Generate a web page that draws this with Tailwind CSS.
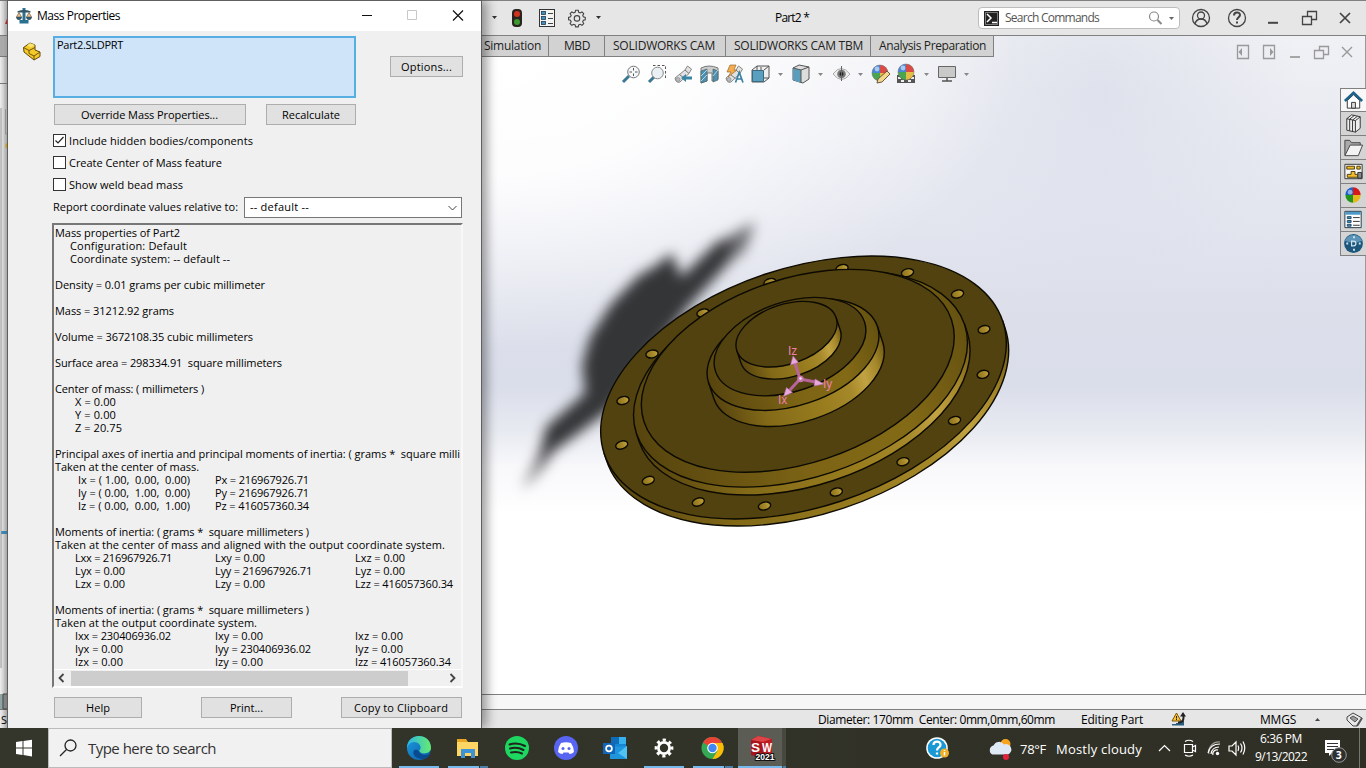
<!DOCTYPE html>
<html lang="en">
<head>
<meta charset="utf-8">
<title>Mass Properties</title>
<script src="https://cdn.jsdelivr.net/npm/@tailwindcss/browser@4"></script>
</head>
<body class="w-[1366px] h-[768px] overflow-hidden font-['Open_Sans','Noto_Sans',sans-serif] text-[11px] text-black bg-[#e6e6e6]">
<svg class="absolute h-0 w-0">
  <defs>
    <linearGradient id="side"><stop offset="0" stop-color="#57440f"/><stop offset=".25" stop-color="#836a18"/><stop offset=".6" stop-color="#9a7e1f"/><stop offset=".74" stop-color="#a5882a"/><stop offset=".84" stop-color="#c2a342"/><stop offset=".93" stop-color="#a3862a"/><stop offset="1" stop-color="#6f5812"/></linearGradient>
    <linearGradient id="chamfer"><stop offset="0" stop-color="#57450e"/><stop offset=".45" stop-color="#7d6415"/><stop offset=".75" stop-color="#836a16"/><stop offset="1" stop-color="#665211"/></linearGradient>
    <linearGradient id="hole"><stop offset="0" stop-color="#8c7119"/><stop offset=".6" stop-color="#a98b2b"/><stop offset="1" stop-color="#c4a53f"/></linearGradient>
    <linearGradient id="edge" x1="0" y1="0" x2="1" y2="1"><stop offset="0" stop-color="#1b9de2"/><stop offset="1" stop-color="#0c59a4"/></linearGradient>
    <linearGradient id="edgeTop"><stop offset="0" stop-color="#2cb5e8"/><stop offset="1" stop-color="#66eb6e"/></linearGradient>
    <filter id="soft" x="-20%" y="-20%" width="140%" height="140%" color-interpolation-filters="sRGB"><feGaussianBlur stdDeviation="6.5"/></filter>
    <g id="ball">
      <path d="M0 0V-8A8 8 0 0 0-8 0z" fill="#4a86d8"/><path d="M0 0V-8A8 8 0 0 1 8 0z" fill="#dc4a44"/>
      <path d="M0 0H-8A8 8 0 0 0 0 8z" fill="#4aa54f"/><path d="M0 0H8A8 8 0 0 1 0 8z" fill="#e6bd44"/>
      <circle r="8" fill="none" stroke="#666" stroke-width=".8" opacity=".6"/><circle cx="-3" cy="-4" r="2.4" fill="#fff" opacity=".55"/>
    </g>
    <g id="tube"><path d="M2 13L12 5L14.500 1L18.500 4L16 8.500L7 17Q3 18.500 2 13z" fill="#e2e2e2" stroke="#888"/><path d="M12 5L16 8.500M6.500 9.500L11.500 13.500" stroke="#777" fill="none"/><circle cx="5" cy="14.500" r="2" fill="#bbb" stroke="#888" stroke-width=".7"/></g>
  </defs>
</svg>

<div class="relative flex flex-col w-[1366px] h-[768px]">
  <!-- main application title bar -->
  <header class="flex h-9 shrink-0 items-center border-t border-b border-[#808080] bg-[#e6e6e6] pl-[482px]">
    <svg class="w-[120px] h-[34px] shrink-0" viewBox="482 1 120 34">
      <path d="M492 16h5l-2.500 3zM596 16h5l-2.500 3z" fill="#333"/>
      <rect x="512" y="9" width="10" height="18" rx="4" fill="#2a2420"/><circle cx="517" cy="14" r="3" fill="#d3321e"/><circle cx="517" cy="22" r="3" fill="#3c9a2e"/>
      <rect x="539.500" y="9.500" width="15" height="17" fill="#f3f3f3" stroke="#333"/>
      <g fill="#3d8fc0" stroke="#24394a" stroke-width=".8"><rect x="541.500" y="11.500" width="4" height="3"/><rect x="541.500" y="16.500" width="4" height="3"/><rect x="541.500" y="21.500" width="4" height="3"/></g>
      <path d="M548 13.500h5M548 18.500h5M548 23.500h5" stroke="#444"/>
      <g transform="translate(577 18) scale(.86) translate(-577 -18.500)"><path d="M575.400 9.500h3l.6 2.300 1.700.8 2.100-1.200 2 2-1.100 2.200.7 1.600 2.200.6v2.800l-2.200.6-.8 1.700 1.200 2.100-2 2-2.200-1.200-1.600.8-.6 2.200h-3l-.6-2.200-1.600-.8-2.200 1.200-2-2 1.200-2.100-.8-1.700-2.200-.6v-2.800l2.200-.6.8-1.600-1.200-2.200 2-2 2.100 1.200 1.700-.8z" fill="none" stroke="#444" stroke-width="1.300"/><circle cx="577" cy="19" r="3.200" fill="none" stroke="#444" stroke-width="1.300"/></g>
    </svg>
    <span class="ml-[173px] w-[203px] text-xs leading-4"><span data-w="34">Part2 *</span></span>
    <div class="flex h-[22px] w-[202px] items-center rounded-sm border border-[#bcbcbc] bg-white pl-[5px]">
      <svg class="size-[15px]" viewBox="0 0 15 15"><path fill="#222" d="M0 0h15v15H0z"/><path d="M1.500 1.500h12v12h-12z" stroke="#bbb" stroke-width=".6" fill="none"/><path d="M3 3l4 4-4 4M8 11.500h5" stroke="#fff" stroke-width="1.500" fill="none"/></svg>
      <span class="ml-[6px] w-[142px] text-xs leading-4 text-[#555]"><span data-w="94">Search Commands</span></span>
      <svg class="h-4 w-[30px]" viewBox="0 0 30 16"><circle cx="7" cy="6.500" r="4.500" fill="none" stroke="#888" stroke-width="1.200"/><path d="M10.500 10l4 4" stroke="#888" stroke-width="2"/><path d="M22 7h5l-2.500 3z" fill="#666"/></svg>
    </div>
    <svg class="ml-[11px] h-[34px] w-[174px]" viewBox="1191 1 174 34" fill="none" stroke="#444" stroke-width="1.300">
      <circle cx="1201" cy="18" r="8.500"/><circle cx="1201" cy="15.500" r="3.500"/><path d="M1195 24c1-4 3-5 6-5s5 1 6 5"/>
      <circle cx="1237" cy="18" r="8.500"/><path d="M1234 15.500c0-4 6-4 6-.5 0 2-3 2.500-3 5M1237 21.500v2" stroke-width="2"/>
      <path d="M1268 22.800h10" stroke-width="2"/><path d="M1307.500 16v-4.500h9v8h-5"/><path d="M1302.500 16.500h9v8h-9z" fill="#e6e6e6"/><path d="M1340 13l10 10M1350 13l-10 10" stroke-width="1.700"/>
    </svg>
  </header>

  <!-- graphics area -->
  <main class="relative h-[658px] shrink-0 border-r border-[#999] bg-[linear-gradient(180deg,#f0f1f5_0px,#e5e7f0_150px,#dcdfea_280px,#dadeea_350px,#e8eaf1_395px,#f8f8fb_430px,#ffffff_480px)]">
    <svg class="absolute left-0 top-0 h-[657px] w-[1365px]" viewBox="0 36 1365 657">
      <defs>
        <radialGradient id="glow" gradientUnits="userSpaceOnUse" cx="480" cy="60" r="430" gradientTransform="translate(480 60) scale(1.25 .68) translate(-480 -60)"><stop offset="0" stop-color="#fff"/><stop offset=".4" stop-color="#fff" stop-opacity=".9"/><stop offset="1" stop-color="#fff" stop-opacity="0"/></radialGradient>
        <radialGradient id="haze" gradientUnits="userSpaceOnUse" cx="1100" cy="90" r="200"><stop offset="0" stop-color="#d8dce8" stop-opacity=".65"/><stop offset="1" stop-color="#d8dce8" stop-opacity="0"/></radialGradient>
      </defs>
      <path fill="url(#haze)" d="M850 36h516v300H850z"/>
      <path fill="url(#glow)" d="M0 36h1365v500H0z"/>
      <g fill="#343537" filter="url(#soft)">
        <path d="M522 490L541 450L560 440L545 465zM722 240L755 222L745 250L724 268z" opacity=".7"/>
        <path d="M538 462L546 427L585 393L582 365L590 337L611 304L638 276L655 266L672 253L681 277L718 241L733 240L724 268L690 305L655 350L612 408L572 438z"/>
      </g>
      <g stroke="#0c0a02" stroke-width="1.400">
        <g transform="translate(803.5 387.5) rotate(-18.4)"><path d="M-210 0V7.500A210 119.600 0 0 0 210 7.500V0z" fill="url(#side)"/><ellipse rx="210" ry="119.600" fill="#52420f"/></g>
        <g fill="url(#hole)">
          <ellipse cx="623" cy="400.500" rx="6.200" ry="3.900" transform="rotate(-14 623 400.500)"/><ellipse cx="621.700" cy="445" rx="6.200" ry="3.900" transform="rotate(-18 621.700 445)"/>
          <ellipse cx="648.300" cy="480.500" rx="6.200" ry="3.900" transform="rotate(-18 648.300 480.500)"/><ellipse cx="698.300" cy="502" rx="6.200" ry="3.900" transform="rotate(-18 698.300 502)"/>
          <ellipse cx="764.500" cy="506" rx="6.200" ry="3.900" transform="rotate(-14 764.500 506)"/><ellipse cx="836.300" cy="492" rx="6.200" ry="3.900" transform="rotate(-14 836.300 492)"/>
          <ellipse cx="903" cy="461.700" rx="6.200" ry="3.900" transform="rotate(-14 903 461.700)"/><ellipse cx="954.500" cy="420.500" rx="6.200" ry="3.900" transform="rotate(-14 954.500 420.500)"/>
          <ellipse cx="983" cy="374.300" rx="6" ry="3.900" transform="rotate(-14 983 374.300)"/><ellipse cx="984" cy="329.500" rx="6" ry="3.900" transform="rotate(-14 984 329.500)"/>
          <ellipse cx="957.500" cy="294" rx="6.200" ry="3.900" transform="rotate(-14 957.500 294)"/><ellipse cx="907.500" cy="272.700" rx="6.200" ry="3.900" transform="rotate(-14 907.500 272.700)"/>
          <ellipse cx="842" cy="268.500" rx="6.200" ry="3.900" transform="rotate(-14 842 268.500)"/><ellipse cx="770" cy="282.500" rx="6.200" ry="3.900" transform="rotate(-14 770 282.500)"/>
          <ellipse cx="703" cy="313" rx="6.200" ry="3.900" transform="rotate(-14 703 313)"/><ellipse cx="652" cy="354" rx="6.200" ry="3.900" transform="rotate(-10 652 354)"/>
        </g>
        <g transform="translate(800.5 379) rotate(-18.4)"><path d="M-172.900 0V8.300A172.900 98.400 0 0 0 172.900 8.300V0z" fill="url(#side)"/><ellipse rx="172.900" ry="98.400" fill="url(#chamfer)"/></g>
        <ellipse rx="162" ry="92.300" fill="#52420f" transform="translate(797.8 370.8) rotate(-18.4)"/>
        <g transform="translate(793 354.500) rotate(-18.4)"><path d="M-89 0V17A89 50.800 0 0 0 89 17V0z" fill="url(#side)"/><ellipse rx="89" ry="50.800" fill="url(#chamfer)"/></g>
        <ellipse rx="78.500" ry="44.700" fill="#52420f" transform="translate(790 346.600) rotate(-18.4)"/>
        <g transform="translate(786.500 334.200) rotate(-18.4)"><path d="M-52.300 0V12.800A52.300 29.800 0 0 0 52.300 12.800V0z" fill="url(#side)"/><ellipse rx="52.300" ry="29.800" fill="#52420f"/></g>
      </g>
      <!-- principal axes triad -->
      <g stroke="#b8649c" stroke-width="3" fill="#e39ad0"><path d="M800 379L795 363M800 379L818 382.500M800 379L789 391"/></g>
      <path d="M793 356l-2.500 9 8-2.500zM824 384l-9-5-1 7zM783.500 396.500l3-9 6 5z" fill="#e6a9dc" stroke="#b565a2" stroke-width=".6"/>
      <circle cx="800.500" cy="379" r="3.300" fill="#c678ae"/><circle cx="800.500" cy="378.500" r="1.200" fill="#ffe4f8"/>
      <g fill="#ee7fae" class="font-['Liberation_Sans',sans-serif] text-[12px]"><text x="788" y="355">Iz</text><text x="823" y="388">Iy</text><text x="778" y="404">Ix</text></g>
      <!-- document window buttons -->
      <g fill="none" stroke="#999"><path d="M1237.500 45.500h11v13h-11zM1263.500 45.500h11v13h-11z" stroke-width="1.300"/><path d="M1242 48v8l-3.500-4zM1270 48v8l3.500-4z" fill="#999" stroke="none"/><path d="M1290 57h10" stroke-width="1.700"/><path d="M1319.500 50.500v-4h9v8h-5M1314.500 50.500h9v8h-9z" stroke-width="1.300"/><path d="M1342 47l10 10M1352 47l-10 10" stroke-width="1.400"/></g>
      <!-- heads-up view icons -->
      <g fill="none">
        <g stroke="#3c7896" stroke-width="3"><path d="M629 76l-6 6M655 76l-6 6"/></g>
        <circle cx="633.500" cy="72" r="5.800" fill="#f5f7f9" stroke="#777"/><path d="M633.500 68v8M629.500 72h8" stroke="#555" stroke-dasharray="2.500 3"/>
        <circle cx="657.500" cy="73" r="5.800" fill="#eaf0f4" stroke="#888"/><path d="M653 65.500h12.500V78" stroke="#555" stroke-dasharray="2.500 2"/>
        <use href="#tube" x="673" y="65"/><path d="M692 79.500h-6v2.500l-5-4 5-4v2.500h6z" fill="#3986a6"/>
        <path d="M701 68q8-4 17 0v11l-6 2v-8h-5v8l-6 2z" fill="#ccc" stroke="#777"/><path d="M701 71l6-2v12l-6 2zM713 69l5 2v9l-5 2z" fill="#4b91b2" stroke="#566" stroke-width=".7"/><path d="M701 76l6-6M701 81l6-6M713 76l5-6" stroke="#b5d4e2"/>
        <use href="#tube" x="724" y="65"/><path d="M730 65h6l-2 5h3l-9 7 3-5h-4z" fill="#f5ac4c" stroke="#9b6a33" stroke-width=".7"/><path d="M735.500 82.500l3.800-10 3.700 10M737 79h5" stroke="#3980a4" stroke-width="1.700"/>
        <path d="M757 66h12v12l-5 4h-12V70z" fill="#eee" stroke="#555"/><path d="M757 66v12h12M764 70l5-4M761 67v6" stroke="#555"/><path d="M752.500 70.500h11v11h-11z" fill="#5a9fbd" stroke="#3b6a80"/>
        <path d="M793 68l6-3 10 2v12l-6 4-10-3z" fill="#ddd" stroke="#555"/><path d="M793 68l8 2v13l-8-3z" fill="#5b9ebb"/><path d="M793 68l8 2 8-3M801 70v13" stroke="#555"/>
        <path d="M833 74q8-11 17 0q-8 11-17 0z" fill="#eee" stroke="#aaa"/><circle cx="841.500" cy="74" r="4.300" fill="#777"/><circle cx="841.500" cy="74" r="2" fill="#222"/><path d="M841.500 66v15" stroke="#666"/>
        <use href="#ball" x="880" y="73"/><path d="M878 79l9-8 3 3-8 8-5 1z" fill="#f3d78a" stroke="#6a5640"/>
        <path d="M897 75h18v8h-18z" fill="#555"/><path d="M898 77h3v2h-3zM911 77h3v2h-3zM901 80h3v2h-3zM908 80h3v2h-3z" fill="#eee"/><use href="#ball" x="906" y="72"/>
        <path d="M938.500 66.500h17v11h-17z" fill="#c9c9c9" stroke="#666"/><path d="M947 78v3M942 81h10" stroke="#555" stroke-width="1.500"/>
        <path d="M778 73h5l-2.500 3zM818 73h5l-2.500 3zM858 73h5l-2.500 3zM924 73h5l-2.500 3zM964 73h5l-2.500 3z" fill="#888"/>
      </g>
    </svg>
    <nav class="relative ml-[482px] flex h-[21px] w-[512px] text-xs leading-[19px] text-[#222]">
      <div class="w-[67px] border-r border-b border-[#808080] bg-[#d2d2d2] pl-[2px]"><span data-w="57">Simulation</span></div>
      <div class="w-14 border-r border-b border-[#808080] bg-[#d2d2d2] pl-[15px]"><span data-w="26">MBD</span></div>
      <div class="w-[121px] border-r border-b border-[#808080] bg-[#d2d2d2] pl-2"><span data-w="102">SOLIDWORKS CAM</span></div>
      <div class="w-[145px] border-r border-b border-[#808080] bg-[#d2d2d2] pl-2"><span data-w="129">SOLIDWORKS CAM TBM</span></div>
      <div class="w-[123px] border-r border-b border-[#808080] bg-[#d2d2d2] pl-2"><span data-w="107">Analysis Preparation</span></div>
    </nav>
    <!-- task pane tabs -->
    <aside class="absolute right-[-1px] top-[52px] flex w-[26px] flex-col border-l border-t border-[#808080] bg-[#d4d4d4]">
      <svg class="h-[23px] border-b border-[#808080] bg-[#f8f8f8]" viewBox="0 0 25 23"><path d="M6 12v8h13v-8l-6.500-6z" fill="#fff" stroke="#333"/><path d="M3.500 12.500l9-8.500 9 8.500" fill="none" stroke="#1f6289" stroke-width="2.800"/><path d="M10.500 20v-6h4v6z" fill="#ddd" stroke="#333"/></svg>
      <svg class="h-6 border-b border-[#808080]" viewBox="0 0 25 24" fill="#eee" stroke="#333"><path d="M5.500 7l5-4 9 2v12l-5 4-9-2zM5.500 7l9 2v12M8.500 7.500v12M11.500 8.500v12M14.500 9l5-4M8.500 7.500l5-4M11.500 8.500l5-4"/></svg>
      <svg class="h-6 border-b border-[#808080]" viewBox="0 0 25 24" stroke="#444"><path d="M3.500 20V4.500h5l2 2.500h9v3" fill="#aaa"/><path d="M3.500 20.500L9 9.500h13l-4.500 11z" fill="#f3f3f3"/></svg>
      <svg class="h-6 border-b border-[#808080]" viewBox="0 0 25 24"><path d="M3.500 4.500h18v15h-18z" fill="#f7f7f7" stroke="#333"/><path d="M5.500 6.500h8v3h-8zM16 6.500h3.500v3H16zM10 12h4v3h3v3H6v-3h4z" fill="#f4bd29" stroke="#4c3c0a"/><path d="M17 13h4v6h-4z" fill="#888" stroke="#333"/></svg>
      <svg class="h-6 border-b border-[#808080]" viewBox="0 0 25 24"><g transform="translate(12 11.500)"><path d="M0 0V-8A8 8 0 0 0-8 0z" fill="#1b61cc"/><path d="M0 0V-8A8 8 0 0 1 8 0z" fill="#d81818"/><path d="M0 0H-8A8 8 0 0 0 0 8z" fill="#22951f"/><path d="M0 0H8A8 8 0 0 1 0 8z" fill="#e5b91c"/><circle cx="-3" cy="-3" r="2.500" fill="#fff" opacity=".5"/></g></svg>
      <svg class="h-6 border-b border-[#808080]" viewBox="0 0 25 24"><path d="M3.500 3.500h17v17h-17z" fill="#fff" stroke="#234"/><path d="M4 4h16v3H4z" fill="#4a9bc7"/><g fill="#4a9bc7" stroke="#1e4864"><path d="M6 9h4v2H6zM6 13h4v2H6zM6 17h4v2H6z"/></g><path d="M12 10h7M12 14h7M12 18h7" stroke="#333"/></svg>
      <svg class="h-6 border-b border-[#808080]" viewBox="0 0 25 24"><circle cx="12.500" cy="12" r="9.800" fill="#1c567c"/><path d="M3.500 9A9.800 9.800 0 0 1 21.500 9Q12 13 3.500 9z" fill="#5b94b6"/><path d="M10.500 9.500h2a2.500 2.500 0 0 1 0 5h-2z" fill="none" stroke="#cfe3ef" stroke-width="1.300"/><path d="M5 12h2M18 12h2M12 5.500h2M12 18.500h2" stroke="#cfe3ef" stroke-width="2"/></svg>
    </aside>
  </main>
  <div class="h-4 shrink-0 border-y border-[#808080] bg-[#f7f7f7]"></div>
  <footer class="flex h-[18px] shrink-0 bg-[#e6e6e6] pl-[818px] text-xs leading-[19px]">
    <span class="w-[263px] whitespace-pre"><span data-w="237">Diameter: 170mm  Center: 0mm,0mm,60mm</span></span>
    <span class="w-[90px]"><span data-w="62">Editing Part</span></span>
    <svg class="w-4 h-[18px]" viewBox="0 0 16 18"><path d="M1 15.500h12V11h-3v1H8v1H5v1H1z" fill="#2a5f80"/><path d="M5.500 3L10 11H1z" fill="#f9c430" stroke="#7e5208"/><path d="M5.500 6v2.500M5.500 9v1" stroke="#222"/><path d="M7 11.500c4 0 4.500-1.500 4.500-5H9L12 2l3 4.500h-1.500c0 5-1.500 7-6.500 7z" fill="#222"/></svg>
    <span class="ml-[73px] w-[55px]"><span data-w="36">MMGS</span></span>
    <svg class="h-[18px] w-[50px]" viewBox="1315 710 50 18"><path d="M1315 721h5l-2.500-3z" fill="#444"/><path d="M1347 717l6-4 9 5-5 8h-4l-6-6z" fill="#e8e8e8" stroke="#444"/><path d="M1350 718l5 4 3-3-5-3z" fill="#999" stroke="#555"/><path d="M1357 726l5-8" stroke="#555" stroke-width="2"/></svg>
  </footer>

  <!-- taskbar -->
  <div class="flex h-10 shrink-0 bg-[linear-gradient(90deg,#35362b,#323328_50%,#2f2f25)] text-white">
    <svg class="w-12 h-10" viewBox="0 0 48 40"><path d="M16 14l6.500-1v6.500H16zM23.500 12.900L32 11.700v7.800h-8.500zM16 20.500h6.500V27L16 26zM23.500 20.500H32v7.900l-8.500-1.300z" fill="#fff"/></svg>
    <div class="flex w-[344px] items-center border border-[#bbb] bg-[#f1f1f1] text-[#333]">
      <svg class="ml-[10px] size-5" viewBox="0 0 20 20" fill="none" stroke="#222" stroke-width="1.300"><circle cx="11.500" cy="7.500" r="5.500"/><path d="M7.500 11.500L1 18"/></svg>
      <span class="ml-[9px] text-[15px]"><span data-w="128">Type here to search</span></span>
    </div>
    <svg class="h-10 w-[394px]" viewBox="392 728 394 40">
      <path d="M738 728h48v40h-48z" fill="#5b5c53"/><path d="M782 728h4v40h-4z" fill="#474840"/>
      <path d="M399 766h40v2h-40zM448 766h31v2h-31zM644 766h40v2h-40zM693 766h31v2h-31zM738 766h44v2h-44z" fill="#76b9ed"/><path d="M480 766h8v2h-8zM725 766h8v2h-8zM783 766h3v2h-3z" fill="#4c7fa8"/>
      <circle cx="419" cy="748" r="12" fill="url(#edge)"/><path d="M407 748C407 732 431 732 431 748C431 754 421 755 419 751C423 747 419 742 414 742Q409 742 407 748z" fill="url(#edgeTop)"/><path d="M419 751C412 746 410 758 422 759C426 759 429 757 430 754C425 756 420 755 419 751z" fill="#0a4a91"/>
      <path d="M457 739h9l2 3h10v14h-21z" fill="#e9a823"/><path d="M457 742h21v14h-21z" fill="#ffd564"/><path d="M461 758v-9h14v9h-4v-5h-6v5z" fill="#3d93d8"/>
      <circle cx="517" cy="748" r="12" fill="#1ed760"/><path d="M509.500 744.500q8-2.500 15.500 1.500M510 748.500q7-2 13.500 1.500M511 752.500q6-1.500 11 1" fill="none" stroke="#20241c" stroke-width="2" stroke-linecap="round"/>
      <circle cx="566" cy="748" r="12" fill="#5865f2"/><path d="M561 743q5-1.500 10 0 3 4 3 9-2 2-4.500 2l-1-1.500h-5l-1 1.500q-2.500 0-4.500-2 0-5 3-9z" fill="#fff"/><circle cx="563" cy="748.500" r="1.500" fill="#5865f2"/><circle cx="569" cy="748.500" r="1.500" fill="#5865f2"/>
      <path d="M611 737h15v14h-15z" fill="#1486d3"/><path d="M611 737h8v7h-8z" fill="#0f6cb8"/><path d="M619 737h7v7h-7z" fill="#36b1ed"/><path d="M610 747l17-1v13h-17z" fill="#1e95dd"/><path d="M627 746l-9 7 9 6z" fill="#50c3f4"/><path d="M603 743h12v11h-12z" fill="#0f66b8"/><circle cx="609" cy="748.500" r="2.900" fill="none" stroke="#fff" stroke-width="1.700"/>
      <g stroke="#fff" fill="none"><circle cx="664" cy="748" r="5.600" stroke-width="2.800"/><circle cx="664" cy="748" r="8" stroke-width="2.800" stroke-dasharray="3.140 3.140" transform="rotate(-11 664 748)"/></g>
      <circle cx="712.500" cy="748" r="11" fill="#34a853"/><path d="M712.500 748L703 742.500A11 11 0 0 1 722 742.500z" fill="#ea4335"/><path d="M712.500 743H722.500A11 11 0 0 1 712.500 759L717.500 751z" fill="#fbbc05"/><circle cx="712.500" cy="748" r="5.300" fill="#fff"/><circle cx="712.500" cy="748" r="4.200" fill="#4285f4"/>
      <path d="M751 740l7-4 14 3v14l-7 6-14-4z" fill="#a9141c"/><path d="M751 740l7-4 14 3-9 3z" fill="#de4348"/><path d="M763 742l9-3v14l-7 6z" fill="#bd1c24"/>
      <g fill="#fff" class="font-['Liberation_Sans',sans-serif] font-bold"><text x="751" y="752" font-size="12" textLength="9" lengthAdjust="spacingAndGlyphs">S</text><text x="762" y="751.500" font-size="12" textLength="10" lengthAdjust="spacingAndGlyphs">W</text><text x="755.500" y="759.500" font-size="8.500" stroke="#111" stroke-width="2" paint-order="stroke">2021</text></g>
    </svg>
    <svg class="ml-[139px] h-10 w-[63px] shrink-0" viewBox="925 728 63 40"><circle cx="937" cy="748" r="10.800" fill="#fff"/><circle cx="937" cy="748" r="9.300" fill="#1899d5"/><path d="M933.500 745c0-4.500 7-4.500 7-.3 0 2.800-3.500 2.800-3.500 5.800M937 752.500v2" stroke="#fff" stroke-width="2.300" fill="none"/><circle cx="944.500" cy="753" r="4.500" fill="#efae27"/><path d="M944.500 752v3.500M944.500 750v1" stroke="#fff" stroke-width="1.500"/></svg>
    <svg class="h-10 w-[32px] shrink-0" viewBox="988 728 32 40"><circle cx="1005.500" cy="744" r="5" fill="#f8a51e"/><path d="M993.500 754.500a4.800 4.800 0 0 1 1-9 6 6 0 0 1 10.500-1 5 5 0 0 1 4 10z" transform="translate(-1 0)" fill="#dfe8f5"/><circle cx="1007" cy="757" r="3" fill="#e2213d" transform="translate(-1 0)"/></svg>
    <span class="w-[36px] shrink-0 text-[13px] leading-[42px]"><span data-w="26">78°F</span></span>
    <span class="w-[102px] shrink-0 text-[13px] leading-[42px]"><span data-w="86">Mostly cloudy</span></span>
    <svg class="h-10 w-[90px] shrink-0" viewBox="1158 728 90 40" fill="none" stroke="#fff" stroke-width="1.200"><path d="M1159 751l5.500-5.500L1170 751"/><path d="M1184.500 744.500h8v8h-8zM1192.500 747l3-1.500v6l-3-1.500M1185 741.500q4-2.500 8 0M1185 755q4 2.500 8 0"/><path d="M1213 755a4 4 0 0 1 5-5M1211 754q1-7 8-7M1208 753q2-9 12-9"/><circle cx="1217.500" cy="753.500" r="1.700" fill="#fff" stroke="none"/><path d="M1209 754a10 10 0 0 1 11-12" opacity=".5"/><path d="M1229 746h3l4-4v13l-4-4h-3zM1238 745.500q1.500 2.500 0 5.500M1240.500 743.500q3 4.500 0 9M1243 741.500q3.500 6.500 0 13"/></svg>
    <div class="-ml-[2px] w-[70px] shrink-0 pt-[2px] text-center text-xs leading-[18px]"><div><span data-w="42">6:36 PM</span></div><div><span data-w="52">9/13/2022</span></div></div>
    <svg class="h-10 w-[40px] shrink-0" viewBox="1316 728 40 40"><path d="M1325 740h15v13h-8l-3 3v-3h-4z" fill="#fff"/><path d="M1327 743.500h11M1327 746.500h11M1327 749.500h7" stroke="#333" stroke-width="1.200"/><circle cx="1339" cy="755" r="7.300" fill="#2f3031" stroke="#999"/><text x="1335.700" y="759" font-size="10.500" font-weight="bold" fill="#fff">3</text></svg>
    <div class="ml-[3px] border-l border-[#77776f]"></div>
  </div>

  <!-- left edge of the feature tree -->
  <div class="absolute left-0 top-0 h-[728px] w-2 overflow-hidden bg-[linear-gradient(90deg,#eeeeee,#a9a9a9)]">
    <svg class="h-[728px] w-2" viewBox="0 0 8 728"><path d="M0 36h8v20H0z" fill="#aaa"/><path d="M0 .5h8M0 35.500h8M0 56.500h8M0 83.500h8M0 709.500h8" stroke="#777"/><path d="M8 16l-3 8h3z" fill="#c22"/><path d="M1 531h7v3H1z" fill="#3a88b8"/><path d="M8 142q-4 2-2 6h2z" fill="#d5a40d"/><path d="M5.500 109v25H8M1 108v560" fill="none" stroke="#999"/><path d="M0 694h8v15H0z" fill="#8da4a4"/><path d="M3 694h5v15H3z" fill="#888" stroke="#444"/><text x="1" y="724" font-size="11">S</text></svg>
  </div>

  <!-- Mass Properties dialog -->
  <section class="absolute left-[7px] top-0 flex h-[728px] w-[475px] flex-col border-x border-t border-[#606060] bg-[#f0f0f0] shadow-[5px_0_10px_rgba(0,0,0,0.38)] [clip-path:inset(0_-16px_0_-3px)]">
    <div class="flex h-[30px] shrink-0 items-center bg-white">
      <svg class="ml-2 h-4 w-4" viewBox="0 0 16 16"><path d="M6.500 0h3v12h3v3.500h-9V12h3z" fill="#2a7090"/><path d="M1.500 3.200q6.500-2.500 13 0v1.300h-13z" fill="#315565"/><path d="M.5 9l2.500-4.500L5.500 9zM10.500 9L13 4.500 15.500 9z" fill="#efc685" stroke="#6a5a50" stroke-width=".7"/><path d="M0 9h6q-.5 3-3 3T0 9M10 9h6q-.5 3-3 3t-3-3" fill="#31566a"/></svg>
      <span class="ml-[5px] w-[316px] text-xs"><span data-w="83">Mass Properties</span></span>
      <svg class="h-[30px] w-[112px]" viewBox="353 1 112 30" fill="none"><path d="M362 15.500h10" stroke="#111"/><path d="M407.500 10.500h9v9h-9z" stroke="#c8c8c8"/><path d="M453 10.500l10 10M463 10.500l-10 10" stroke="#111" stroke-width="1.200"/></svg>
    </div>
    <div class="flex h-[67px] shrink-0 pt-[5px] pl-[14px]">
      <svg class="mt-[4px] h-[22px] w-5" viewBox="0 0 20 22"><path d="M1.500 7.500L8 3l5 2v5l5 2v4.500L12 20 2 12z" fill="#f5c928" stroke="#5e480c"/><path d="M1.500 7.500l5.500 3v3l5 2.500v4M7 10.500l6-3M12 16l6-4M8 3v3" fill="none" stroke="#6d5410"/><path d="M8 3l5 2-4 2.500-4-2z" fill="#fae36f"/></svg>
      <div class="ml-[11px] h-[62px] w-[303px] border-2 border-[#57aee2] bg-[#cfe4f8] pl-[2px] leading-[14px]"><span data-w="66">Part2.SLDPRT</span></div>
      <div class="ml-[34px] mt-5 h-[21px] w-[73px] border border-[#adadad] bg-[#e1e1e1] pl-[10px] leading-5"><span data-w="51">Options...</span></div>
    </div>
    <div class="flex shrink-0 pl-[46px] pt-[6px] leading-5">
      <div class="h-[21px] w-[192px] border border-[#adadad] bg-[#e1e1e1] pl-[26px]"><span data-w="137">Override Mass Properties...</span></div>
      <div class="ml-5 h-[21px] w-[90px] border border-[#adadad] bg-[#e1e1e1] pl-[15px]"><span data-w="58">Recalculate</span></div>
    </div>
    <div class="flex shrink-0 flex-col pl-[45px] pt-[5px] leading-[22px]">
      <div class="flex h-[22px] items-center gap-[3px]"><svg class="-mt-px size-[13px] border border-[#333] bg-white" viewBox="0 0 11 11"><path d="M1.500 5.500L4 8l5.500-6" fill="none" stroke="#222" stroke-width="1.200"/></svg><span data-w="184">Include hidden bodies/components</span></div>
      <div class="flex h-[22px] items-center gap-[3px]"><i class="-mt-px size-[13px] border border-[#333] bg-white"></i><span data-w="153">Create Center of Mass feature</span></div>
      <div class="flex h-[22px] items-center gap-[3px]"><i class="-mt-px size-[13px] border border-[#333] bg-white"></i><span data-w="114">Show weld bead mass</span></div>
      <div class="mt-[1px] flex h-[21px] items-center">
        <span class="w-[191px] pb-[2px] leading-5"><span data-w="185">Report coordinate values relative to:</span></span>
        <div class="flex h-[21px] w-[218px] items-center border border-[#777] bg-white pl-[5px]"><span class="w-[198px] pb-[2px] leading-[17px]"><span data-w="59">-- default --</span></span><svg class="h-2 w-[9px]" viewBox="0 0 9 8" fill="none" stroke="#444"><path d="M.5 2l4 4 4-4"/></svg></div>
      </div>
    </div>
    <div class="ml-11 mt-[5px] flex h-[465px] w-[411px] shrink-0 flex-col border-2 border-t-[#777] border-l-[#777] border-r-[#f8f8f8] border-b-white">
      <div class="h-[444px] overflow-hidden pl-[1px] pt-[1px] leading-[13px]">
        <div class="h-[13px]"><span data-w="125">Mass properties of Part2</span></div>
        <div class="h-[13px] pl-[15px]"><span data-w="117">Configuration: Default</span></div>
        <div class="h-[13px] pl-[15px]"><span data-w="160">Coordinate system: -- default --</span></div>
        <div class="mt-[13px] h-[13px]"><span data-w="210">Density = 0.01 grams per cubic millimeter</span></div>
        <div class="mt-[13px] h-[13px]"><span data-w="119">Mass = 31212.92 grams</span></div>
        <div class="mt-[13px] h-[13px]"><span data-w="198">Volume = 3672108.35 cubic millimeters</span></div>
        <div class="mt-[13px] h-[13px]"><span data-w="227">Surface area = 298334.91  square millimeters</span></div>
        <div class="mt-[13px] h-[13px]"><span data-w="149">Center of mass: ( millimeters )</span></div>
        <div class="h-[13px] pl-5"><span data-w="41">X = 0.00</span></div>
        <div class="h-[13px] pl-5"><span data-w="41">Y = 0.00</span></div>
        <div class="h-[13px] pl-5"><span data-w="47">Z = 20.75</span></div>
        <div class="mt-[13px] h-[13px]"><span data-w="405">Principal axes of inertia and principal moments of inertia: ( grams *  square milli</span></div>
        <div class="h-[13px]"><span data-w="144">Taken at the center of mass.</span></div>
        <div class="grid h-[13px] grid-cols-[137px_140px] pl-[23px]"><span data-w="112">Ix = ( 1.00,  0.00,  0.00)</span><span data-w="94">Px = 216967926.71</span></div>
        <div class="grid h-[13px] grid-cols-[137px_140px] pl-[23px]"><span data-w="112">Iy = ( 0.00,  1.00,  0.00)</span><span data-w="94">Py = 216967926.71</span></div>
        <div class="grid h-[13px] grid-cols-[137px_140px] pl-[23px]"><span data-w="112">Iz = ( 0.00,  0.00,  1.00)</span><span data-w="94">Pz = 416057360.34</span></div>
        <div class="mt-[13px] h-[13px]"><span data-w="254">Moments of inertia: ( grams *  square millimeters )</span></div>
        <div class="h-[13px]"><span data-w="390">Taken at the center of mass and aligned with the output coordinate system.</span></div>
        <div class="grid h-[13px] grid-cols-[140px_140px_120px] pl-5"><span data-w="97">Lxx = 216967926.71</span><span data-w="50">Lxy = 0.00</span><span data-w="50">Lxz = 0.00</span></div>
        <div class="grid h-[13px] grid-cols-[140px_140px_120px] pl-5"><span data-w="50">Lyx = 0.00</span><span data-w="97">Lyy = 216967926.71</span><span data-w="50">Lyz = 0.00</span></div>
        <div class="grid h-[13px] grid-cols-[140px_140px_120px] pl-5"><span data-w="50">Lzx = 0.00</span><span data-w="50">Lzy = 0.00</span><span data-w="98">Lzz = 416057360.34</span></div>
        <div class="mt-[13px] h-[13px]"><span data-w="254">Moments of inertia: ( grams *  square millimeters )</span></div>
        <div class="h-[13px]"><span data-w="202">Taken at the output coordinate system.</span></div>
        <div class="grid h-[13px] grid-cols-[140px_140px_120px] pl-5"><span data-w="96">Ixx = 230406936.02</span><span data-w="48">Ixy = 0.00</span><span data-w="48">Ixz = 0.00</span></div>
        <div class="grid h-[13px] grid-cols-[140px_140px_120px] pl-5"><span data-w="48">Iyx = 0.00</span><span data-w="96">Iyy = 230406936.02</span><span data-w="48">Iyz = 0.00</span></div>
        <div class="grid h-[13px] grid-cols-[140px_140px_120px] pl-5"><span data-w="48">Izx = 0.00</span><span data-w="48">Izy = 0.00</span><span data-w="96">Izz = 416057360.34</span></div>
      </div>
      <div class="flex h-[17px] items-center border-t border-white">
        <svg class="h-4 w-[17px]" viewBox="0 0 17 16" fill="none" stroke="#444" stroke-width="1.800"><path d="M9.500 4l-4 4 4 4"/></svg>
        <div class="h-[15px] w-[337px] bg-[#cdcdcd]"></div>
        <svg class="ml-9 h-4 w-[17px]" viewBox="0 0 17 16" fill="none" stroke="#444" stroke-width="1.800"><path d="M6.500 4l4 4-4 4"/></svg>
      </div>
    </div>
    <div class="flex pl-[46px] pt-[9px] leading-5">
      <div class="h-[21px] w-[88px] border border-[#adadad] bg-[#e1e1e1] pl-[31px]"><span data-w="24">Help</span></div>
      <div class="ml-[59px] h-[21px] w-[91px] border border-[#adadad] bg-[#e1e1e1] pl-[28px]"><span data-w="33">Print...</span></div>
      <div class="ml-[49px] h-[21px] w-[121px] border border-[#adadad] bg-[#e1e1e1] pl-[12px]"><span data-w="94">Copy to Clipboard</span></div>
    </div>
  </section>
</div>
<script>
// Spread each label's letters so that it fills its nominal width in pixels.
function fitLabels() {
  document.querySelectorAll('[data-w]').forEach(el => {
    el.style.whiteSpace = 'pre';
    el.style.justifySelf = 'start';
    el.style.letterSpacing = '0px';
    const natural = el.getBoundingClientRect().width;
    el.style.letterSpacing = ((+el.dataset.w - natural) / el.textContent.length).toFixed(3) + 'px';
  });
}
window.addEventListener('load', () => { fitLabels(); document.fonts.ready.then(fitLabels); });
</script>
</body>
</html>
